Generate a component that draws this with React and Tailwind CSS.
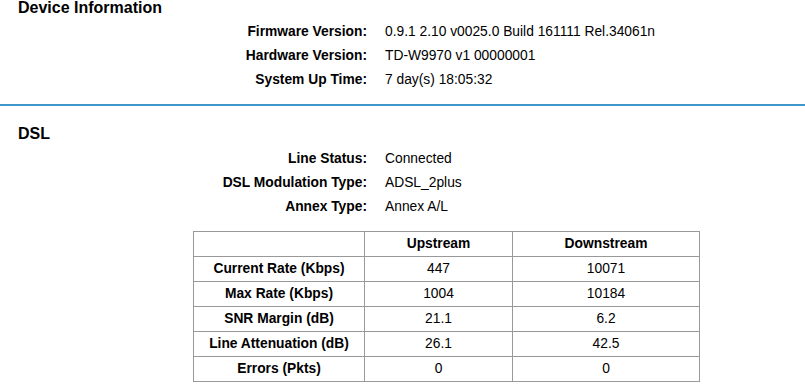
const deviceInfo = [
  ['Firmware Version:', '0.9.1 2.10 v0025.0 Build 161111 Rel.34061n'],
  ['Hardware Version:', 'TD-W9970 v1 00000001'],
  ['System Up Time:', '7 day(s) 18:05:32'],
];

const dslInfo = [
  ['Line Status:', 'Connected'],
  ['DSL Modulation Type:', 'ADSL_2plus'],
  ['Annex Type:', 'Annex A/L'],
];

const stats = [
  ['Current Rate (Kbps)', '447', '10071'],
  ['Max Rate (Kbps)', '1004', '10184'],
  ['SNR Margin (dB)', '21.1', '6.2'],
  ['Line Attenuation (dB)', '26.1', '42.5'],
  ['Errors (Pkts)', '0', '0'],
];

function InfoRows({ rows }) {
  return (
    <div className="grid grid-cols-[367px_auto] gap-x-[18px] text-[13.8px] leading-6">
      {rows.map(([label, value]) => (
        <div key={label} className="contents">
          <div className="text-right font-bold">{label}</div>
          <div>{value}</div>
        </div>
      ))}
    </div>
  );
}

export default function App() {
  return (
    <div className="w-[805px] h-[392px] overflow-hidden bg-white text-black font-['Liberation_Sans',Arial,sans-serif]">
      <h2 className="pl-[18px] text-[16px] leading-4 font-bold">Device Information</h2>
      <div className="mt-1">
        <InfoRows rows={deviceInfo} />
      </div>

      <div className="mt-3 h-[2px] bg-[#3f96cb]" />

      <h2 className="mt-5 pl-[18px] text-[16px] leading-4 font-bold">DSL</h2>
      <div className="mt-[5px]">
        <InfoRows rows={dslInfo} />
      </div>

      <table className="mt-3 ml-[193px] w-[506px] table-fixed border-collapse text-[13.8px] text-center">
        <colgroup>
          <col className="w-[171px]" />
          <col className="w-[148px]" />
          <col className="w-[187px]" />
        </colgroup>
        <thead>
          <tr className="h-[25px]">
            <th className="border border-[#999] p-0"></th>
            <th className="border border-[#999] p-0 font-bold">Upstream</th>
            <th className="border border-[#999] p-0 font-bold">Downstream</th>
          </tr>
        </thead>
        <tbody>
          {stats.map(([label, up, down]) => (
            <tr key={label} className="h-[25px]">
              <td className="border border-[#999] p-0 font-bold">{label}</td>
              <td className="border border-[#999] p-0">{up}</td>
              <td className="border border-[#999] p-0">{down}</td>
            </tr>
          ))}
        </tbody>
      </table>
    </div>
  );
}
